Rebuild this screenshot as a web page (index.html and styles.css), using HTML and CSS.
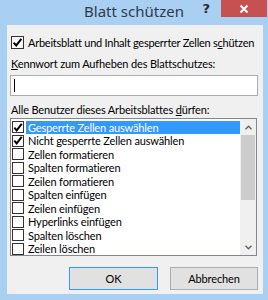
FILE: index.html
```html
<!DOCTYPE html>
<html lang="de">
<head>
<meta charset="utf-8">
<title>Blatt schützen</title>
<link rel="stylesheet" href="styles.css">
</head>
<body>
<div class="window">
  <div class="titlebar">
    <div class="spacer"></div>
    <div class="title">Blatt schützen</div>
    <div class="controls">
      <span class="help">?</span>
      <span class="close">
        <svg width="10" height="10" viewBox="0 0 10 10"><path d="M1.5 1.5 L8.5 8.5 M8.5 1.5 L1.5 8.5" stroke="#fff" stroke-width="2" fill="none"/></svg>
      </span>
    </div>
  </div>
  <div class="panel">
    <div class="check-row">
      <span class="box">
        <svg class="tick" width="11" height="11" viewBox="0 0 11 11"><path d="M1.6 5.6 L4.2 8.4 L9.4 1.8" stroke="#000" stroke-width="2" fill="none"/></svg>
      </span>
      <span class="label">Arbeitsblatt und Inhalt gesperrter Zellen s<u>c</u>hützen</span>
    </div>
    <div class="caption caption-1"><u>K</u>ennwort zum Aufheben des Blattschutzes:</div>
    <div class="input"><span class="caret"></span></div>
    <div class="caption caption-2">Alle Benutzer dieses Arbeitsblattes <u>d</u>ürfen:</div>
    <div class="list">
      <div class="items">
        <div class="item selected"><span class="lbox"><svg class="tick" width="11" height="11" viewBox="0 0 11 11"><path d="M1.4 5.6 L4 8.6 L9.6 1.6" stroke="#000" stroke-width="2.2" fill="none"/></svg></span><span class="text">Gesperrte Zellen auswählen</span></div>
        <div class="item"><span class="lbox"><svg class="tick" width="11" height="11" viewBox="0 0 11 11"><path d="M1.4 5.6 L4 8.6 L9.6 1.6" stroke="#000" stroke-width="2.2" fill="none"/></svg></span><span class="text">Nicht gesperrte Zellen auswählen</span></div>
        <div class="item"><span class="lbox"></span><span class="text">Zellen formatieren</span></div>
        <div class="item"><span class="lbox"></span><span class="text">Spalten formatieren</span></div>
        <div class="item"><span class="lbox"></span><span class="text">Zeilen formatieren</span></div>
        <div class="item"><span class="lbox"></span><span class="text">Spalten einfügen</span></div>
        <div class="item"><span class="lbox"></span><span class="text">Zeilen einfügen</span></div>
        <div class="item"><span class="lbox"></span><span class="text">Hyperlinks einfügen</span></div>
        <div class="item"><span class="lbox"></span><span class="text">Spalten löschen</span></div>
        <div class="item"><span class="lbox"></span><span class="text">Zeilen löschen</span></div>
      </div>
      <div class="scrollbar">
        <div class="arrow">
          <svg width="7" height="5" viewBox="0 0 7 5"><path d="M0.5 4.2 L3.5 1.2 L6.5 4.2" stroke="#606060" stroke-width="1.3" fill="none"/></svg>
        </div>
        <div class="track"><div class="thumb"></div></div>
        <div class="arrow">
          <svg width="7" height="5" viewBox="0 0 7 5"><path d="M0.5 0.8 L3.5 3.8 L6.5 0.8" stroke="#606060" stroke-width="1.3" fill="none"/></svg>
        </div>
      </div>
    </div>
    <div class="buttons">
      <div class="btn default">OK</div>
      <div class="btn">Abbrechen</div>
    </div>
  </div>
</div>
</body>
</html>
```

FILE: styles.css
```css
html, body {
  margin: 0;
  padding: 0;
}
body {
  width: 268px;
  height: 300px;
  overflow: hidden;
  font-family: "Lato", "Noto Sans", sans-serif;
  font-size: 11px;
  letter-spacing: -0.15px;
  color: #000;
}
.window {
  width: 268px;
  height: 300px;
  background: #a9cff3;
  display: flex;
  flex-direction: column;
}
.titlebar {
  height: 25px;
  display: grid;
  grid-template-columns: 1fr auto 1fr;
  align-items: start;
}
.title {
  font-family: "Noto Sans", sans-serif;
  font-size: 15px;
  letter-spacing: 0;
  line-height: 22px;
  color: #2e3b4a;
}
.controls {
  display: flex;
  justify-content: flex-end;
  align-items: flex-start;
  padding-right: 1px;
}
.help {
  font-family: "DejaVu Sans", sans-serif;
  font-weight: bold;
  font-size: 13px;
  line-height: 17px;
  color: #2a2a2a;
  margin-right: 11px;
}
.close {
  width: 46px;
  height: 17px;
  background: #c75050;
  display: flex;
  align-items: center;
  justify-content: center;
}
.panel {
  flex: 1;
  margin: 0 5px 6px 7px;
  background: #f0f0f0;
  display: flex;
  flex-direction: column;
  padding: 0 5px 0 3px;
}
.check-row {
  display: flex;
  align-items: center;
  margin-top: 11px;
  height: 13px;
}
.box {
  width: 11px;
  height: 11px;
  border: 1px solid #333;
  background: #fff;
  display: flex;
  align-items: center;
  justify-content: center;
  margin-right: 4px;
  margin-left: 1px;
  flex: none;
}
.label {
  white-space: nowrap;
  letter-spacing: -0.25px;
}
.caption {
  height: 14px;
  line-height: 14px;
  padding-left: 1px;
  white-space: nowrap;
}
.caption-1 {
  margin-top: 8px;
}
.input {
  margin-top: 4px;
  height: 21px;
  box-sizing: border-box;
  border: 1px solid #abadb3;
  background: #fff;
  display: flex;
  align-items: center;
  padding-left: 3px;
}
.caret {
  width: 1px;
  height: 13px;
  background: #000;
}
.caption-2 {
  margin-top: 7px;
}
.list {
  margin-top: 1px;
  height: 138px;
  box-sizing: border-box;
  border: 1px solid #828790;
  background: #fff;
  display: flex;
  margin-right: 1px;
}
.items {
  flex: 1;
  padding-top: 1.5px;
  padding-left: 1px;
  overflow: hidden;
}
.item {
  height: 13.5px;
  display: flex;
  align-items: center;
  white-space: nowrap;
}
.lbox {
  width: 10px;
  height: 10px;
  border: 1px solid #333;
  background: #fff;
  display: flex;
  align-items: center;
  justify-content: center;
  flex: none;
}
.text {
  margin-left: 2px;
  padding-left: 2px;
  line-height: 13px;
  flex: 1;
}
.selected .text {
  background: #3399ff;
  color: #fff;
}
.scrollbar {
  width: 16px;
  background: #f0f0f0;
  display: flex;
  flex-direction: column;
}
.arrow {
  height: 16px;
  display: flex;
  align-items: center;
  justify-content: center;
}
.track {
  flex: 1;
  padding: 0 1px;
}
.thumb {
  height: 65px;
  background: #cdcdcd;
}
.buttons {
  margin-top: 11px;
  display: flex;
  justify-content: flex-end;
  gap: 12px;
}
.btn {
  width: 88px;
  height: 23px;
  box-sizing: border-box;
  border: 1px solid #adadad;
  background: #e1e1e1;
  display: flex;
  align-items: center;
  justify-content: center;
}
.btn.default {
  width: 89px;
  border-color: #3399ff;
}
```
